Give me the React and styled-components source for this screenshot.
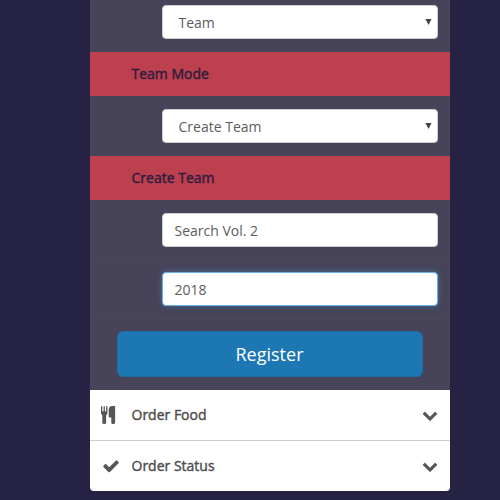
import React from "react";
import styled, { createGlobalStyle } from "styled-components";

const GlobalStyle = createGlobalStyle`
  * { box-sizing: border-box; }
  body {
    margin: 0;
    background: #252243;
    font-family: "Open Sans", "Liberation Sans", sans-serif;
    font-size: 14px;
    line-height: 20px;
    color: #4d4d4d;
    overflow: hidden;
  }
`;

const Page = styled.main`
  width: 500px;
  height: 500px;
  padding-left: 90px;
`;

const Accordion = styled.div`
  width: 360px;
  border-radius: 0 0 4px 4px;
  overflow: hidden;
  background: #474358;
`;

const Row = styled.div`
  height: ${(p) => p.$height}px;
  padding: ${(p) => p.$top}px 12px 0 72px;
  border-bottom: 1px solid ${(p) => (p.$divided ? "#4b475c" : "transparent")};
`;

const Control = styled.div`
  height: 34px;
  display: flex;
  align-items: center;
  justify-content: space-between;
  padding: 1px ${(p) => (p.$select ? "5.5px 0 15.5px" : "12px 0 11.5px")};
  color: #5c5c5c;
  background: #fff;
  border: 1px solid ${(p) => (p.$focused ? "#66afe9" : "#ccc")};
  border-radius: 4px;
  box-shadow: ${(p) => (p.$focused ? "0 0 6px rgba(70, 140, 200, 0.6)" : "none")};
`;

const Heading = styled.h2`
  height: 44px;
  margin: 0;
  padding: 12px 41.5px;
  font-size: 14px;
  font-weight: 400;
  line-height: 20px;
  color: #2d1c3e;
  -webkit-text-stroke: 0.4px currentColor;
  background: #bc404e;
`;

const Actions = styled.div`
  height: 71px;
  padding: 12px 27px 0;
`;

const RegisterButton = styled.button`
  display: block;
  width: 100%;
  height: 46px;
  padding: 0 1px 0 0;
  border: 1px solid #1b6da3;
  border-radius: 6px;
  background: #1c77b3;
  color: #fff;
  font: 400 18px/24px "Open Sans", sans-serif;
`;

const Link = styled.div`
  height: ${(p) => (p.$last ? 50 : 51)}px;
  display: grid;
  grid-template-columns: 41.5px 1fr 28.5px;
  align-items: center;
  background: #fff;
  border-bottom: ${(p) => (p.$last ? "none" : "1px solid #ccc")};
`;

const Label = styled.span`
  -webkit-text-stroke: 0.4px currentColor;
`;

const Glyph = styled.svg`
  display: block;
  fill: #565656;
  margin-left: ${(p) => p.$left || 0}px;
  margin-bottom: 1px;
`;

const Arrow = styled.svg`
  display: block;
  fill: #444;
  margin-bottom: 2px;
`;

const paths = {
  cutlery:
    "M640 1472v-640q0 -61 -35.5 -111t-92.5 -70v-779q0 -52 -38 -90t-90 -38h-128q-52 0 -90 38t-38 90v779q-57 20 -92.5 70t-35.5 111v640q0 26 19 45t45 19t45 -19t19 -45v-416q0 -26 19 -45t45 -19t45 19t19 45v416q0 26 19 45t45 19t45 -19t19 -45v-416q0 -26 19 -45t45 -19t45 19t19 45v416q0 26 19 45t45 19t45 -19t19 -45zM1408 1472v-1600q0 -52 -38 -90t-90 -38h-128q-52 0 -90 38t-38 90v512h-224q-13 0 -22.5 9.5t-9.5 22.5v800q0 132 94 226t226 94h256q26 0 45 -19t19 -45z",
  check:
    "M1671 970q0 -40 -28 -68l-724 -724l-136 -136q-28 -28 -68 -28t-68 28l-136 136l-362 362q-28 28 -28 68t28 68l136 136q28 28 68 28t68 -28l294 -295l656 657q28 28 68 28t68 -28l136 -136q28 -28 28 -68z",
  chevron:
    "M1683 728l-742 -741q-19 -19 -45 -19t-45 19l-742 741q-19 19 -19 45.5t19 45.5l166 165q19 19 45 19t45 -19l531 -531l531 531q19 19 45 19t45 -19l166 -165q19 -19 19 -45.5t-19 -45.5z",
};

function Icon({ name, size, left }) {
  return (
    <Glyph width={size} height={size} viewBox="0 0 1792 1792" $left={left} aria-hidden="true">
      <path transform="translate(0 1536) scale(1 -1)" d={paths[name]} />
    </Glyph>
  );
}

function Select({ children }) {
  return (
    <Control $select>
      <span>{children}</span>
      <Arrow width="7" height="6" viewBox="0 0 7 6" aria-hidden="true">
        <path d="M0.5 0h6L3.5 6z" />
      </Arrow>
    </Control>
  );
}

function MenuLink({ icon, left, last, children }) {
  return (
    <Link $last={last}>
      <Icon name={icon} size={18} left={left} />
      <Label>{children}</Label>
      <Icon name="chevron" size={16} />
    </Link>
  );
}

export default function App() {
  return (
    <Page>
      <GlobalStyle />
      <Accordion>
        <Row $height={52} $top={5}>
          <Select>Team</Select>
        </Row>
        <Heading>Team Mode</Heading>
        <Row $height={60} $top={13}>
          <Select>Create Team</Select>
        </Row>
        <Heading>Create Team</Heading>
        <Row $height={60} $top={13} $divided>
          <Control>Search Vol. 2</Control>
        </Row>
        <Row $height={59} $top={12} $divided>
          <Control $focused>2018</Control>
        </Row>
        <Actions>
          <RegisterButton type="button">Register</RegisterButton>
        </Actions>
        <MenuLink icon="cutlery" left={11}>Order Food</MenuLink>
        <MenuLink icon="check" left={11.5} last>Order Status</MenuLink>
      </Accordion>
    </Page>
  );
}
